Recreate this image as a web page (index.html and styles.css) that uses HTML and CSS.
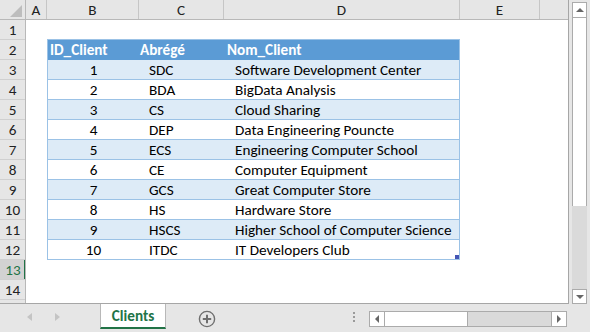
FILE: index.html
```html
<!DOCTYPE html>
<html>
<head>
<meta charset="utf-8">
<link rel="stylesheet" href="styles.css">
</head>
<body>
<div class="app">
  <div class="main">
    <div class="sheet">
      <div class="colhdr">
        <div class="corner"><svg width="25" height="19" viewBox="0 0 25 19"><polygon points="22,5 22,17 10,17" fill="#bdbdbd"/></svg></div>
        <div class="ch w-a">A</div>
        <div class="ch w-b">B</div>
        <div class="ch w-c">C</div>
        <div class="ch w-d">D</div>
        <div class="ch w-e">E</div>
        <div class="ch w-f"></div>
      </div>
      <div class="body">
        <div class="rowhdrs">
          <div class="rh">1</div>
          <div class="rh">2</div>
          <div class="rh">3</div>
          <div class="rh">4</div>
          <div class="rh">5</div>
          <div class="rh">6</div>
          <div class="rh">7</div>
          <div class="rh">8</div>
          <div class="rh">9</div>
          <div class="rh">10</div>
          <div class="rh">11</div>
          <div class="rh">12</div>
          <div class="rh rh-sel">13</div>
          <div class="rh">14</div>
          <div class="rh"></div>
        </div>
        <div class="cells">
          <div class="tbl">
            <div class="tr th"><div class="c cb">ID_Client</div><div class="c cc">Abrégé</div><div class="c cd">Nom_Client</div></div>
            <div class="tr odd"><div class="c cb num">1</div><div class="c cc">SDC</div><div class="c cd">Software Development Center</div></div>
            <div class="tr"><div class="c cb num">2</div><div class="c cc">BDA</div><div class="c cd">BigData Analysis</div></div>
            <div class="tr odd"><div class="c cb num">3</div><div class="c cc">CS</div><div class="c cd">Cloud Sharing</div></div>
            <div class="tr"><div class="c cb num">4</div><div class="c cc">DEP</div><div class="c cd">Data Engineering Pouncte</div></div>
            <div class="tr odd"><div class="c cb num">5</div><div class="c cc">ECS</div><div class="c cd">Engineering Computer School</div></div>
            <div class="tr"><div class="c cb num">6</div><div class="c cc">CE</div><div class="c cd">Computer Equipment</div></div>
            <div class="tr odd"><div class="c cb num">7</div><div class="c cc">GCS</div><div class="c cd">Great Computer Store</div></div>
            <div class="tr"><div class="c cb num">8</div><div class="c cc">HS</div><div class="c cd">Hardware Store</div></div>
            <div class="tr odd"><div class="c cb num">9</div><div class="c cc">HSCS</div><div class="c cd">Higher School of Computer Science</div></div>
            <div class="tr last"><div class="c cb num">10</div><div class="c cc">ITDC</div><div class="c cd">IT Developers Club</div><span class="handle"></span></div>
          </div>
        </div>
      </div>
    </div>
    <div class="vscroll">
      <div class="sbtn vup"><svg width="14" height="14" viewBox="0 0 14 14"><polygon points="3,9 11,9 7,5" fill="#666"/></svg></div>
      <div class="vthumb"></div>
      <div class="vtrack"></div>
      <div class="sbtn vdown"><svg width="14" height="13" viewBox="0 0 14 13"><polygon points="3,5 11,5 7,9" fill="#666"/></svg></div>
    </div>
  </div>
  <div class="tabbar">
    <div class="nav">
      <svg width="100" height="28" viewBox="0 0 100 28"><polygon points="32,9 32,17 27,13" fill="#c4c4c4"/><polygon points="55,9 55,17 60,13" fill="#c4c4c4"/></svg>
    </div>
    <div class="tab">Clients</div>
    <div class="add"><svg width="18" height="18" viewBox="0 0 18 18"><circle cx="9" cy="9" r="7.6" fill="none" stroke="#6f6f6f" stroke-width="1.4"/><path d="M9 4.8V13.2M4.8 9H13.2" stroke="#6f6f6f" stroke-width="2"/></svg></div>
    <div class="grip"><span></span><span></span><span></span></div>
    <div class="hscroll">
      <div class="sbtn hl"><svg width="14" height="14" viewBox="0 0 14 14"><polygon points="9,3 9,11 5,7" fill="#666"/></svg></div>
      <div class="hthumb"></div>
      <div class="htrack"></div>
      <div class="sbtn hr"><svg width="14" height="14" viewBox="0 0 14 14"><polygon points="5,3 5,11 9,7" fill="#666"/></svg></div>
    </div>
  </div>
</div>
</body>
</html>
```
FILE: styles.css
```css
* { box-sizing: border-box; }
html, body { margin: 0; padding: 0; }
body {
  width: 590px;
  height: 332px;
  overflow: hidden;
  background: #e6e6e6;
  font-family: "Carlito", "Lato", "Noto Sans", sans-serif;
  font-size: 15.2px;
  color: #000;
}
.app { width: 590px; height: 332px; display: flex; flex-direction: column; }
.main { height: 304px; display: flex; }
.sheet {
  width: 569px;
  height: 304px;
  background: #fff;
  border-right: 1px solid #a6a6a6;
  border-bottom: 1px solid #a6a6a6;
  display: flex;
  flex-direction: column;
  overflow: hidden;
}
.colhdr {
  height: 20px;
  flex: none;
  display: flex;
  background: #e6e6e6;
  border-bottom: 1px solid #b8b8b8;
}
.corner { width: 26px; border-right: 1px solid #b8b8b8; line-height: 0; }
.ch {
  border-right: 1px solid #c6c6c6;
  text-align: center;
  line-height: 20px;
  color: #222;
}
.w-a { width: 21px; }
.w-b { width: 92px; }
.w-c { width: 85px; }
.w-d { width: 236px; }
.w-e { width: 80px; }
.w-f { width: 28px; border-right: none; }
.body { flex: 1; display: flex; min-height: 0; }
.rowhdrs {
  width: 26px;
  flex: none;
  background: #e6e6e6;
  border-right: 1px solid #b8b8b8;
  overflow: hidden;
}
.rh {
  height: 20px;
  border-bottom: 1px solid #d0d0d0;
  text-align: center;
  line-height: 21px;
  color: #222;
  overflow: hidden;
}
.rh-sel {
  background: #d2d2d2;
  color: #217346;
  box-shadow: inset -2px 0 0 #217346;
  margin-right: -1px;
}
.cells { flex: 1; padding-left: 21px; padding-top: 19px; }
.tbl {
  width: 413px;
  border: 1px solid #9bc2e6;
  border-bottom: none;
}
.tr { display: flex; height: 20px; border-bottom: 1px solid #9bc2e6; position: relative; }
.tr.odd { background: #ddebf7; }
.th { background: #5b9bd5; color: #fff; font-weight: bold; border-bottom: none; }
.c { line-height: 21px; white-space: nowrap; overflow: hidden; }
.cb { width: 91px; padding-left: 2px; }
.cc { width: 85px; padding-left: 10px; }
.cd { width: 235px; padding-left: 11px; }
.th .cc { padding-left: 1px; }
.th .cd { padding-left: 3px; }
.cb.num { text-align: center; padding-left: 0; }
.handle {
  position: absolute;
  right: 0;
  bottom: 0;
  width: 4px;
  height: 4px;
  background: #4455b5;
}
.vscroll {
  width: 21px;
  height: 304px;
  padding: 2px 3px 0 3px;
  display: flex;
  flex-direction: column;
  background: #e6e6e6;
}
.sbtn {
  background: #fff;
  border: 1px solid #ababab;
  line-height: 0;
  flex: none;
}
.vup { height: 16px; }
.vthumb { height: 188px; background: #fff; border-left: 1px solid #ababab; border-right: 1px solid #ababab; }
.vtrack { flex: 1; background: #dadada; }
.vdown { height: 15px; }
.tabbar { height: 28px; display: flex; align-items: flex-start; }
.nav { width: 100px; height: 28px; line-height: 0; }
.tab {
  width: 66px;
  height: 25px;
  background: #fff;
  border-left: 1px solid #b8b8b8;
  border-right: 1px solid #b8b8b8;
  border-bottom: 2px solid #217346;
  color: #217346;
  font-weight: bold;
  text-align: center;
  line-height: 25px;
}
.add { margin-left: 32px; margin-top: 6px; line-height: 0; }
.grip {
  margin-left: 137px;
  margin-top: 8px;
  width: 3px;
  display: flex;
  flex-direction: column;
  gap: 2px;
}
.grip span { width: 2px; height: 2px; background: #9a9a9a; }
.hscroll {
  margin-left: 13px;
  margin-top: 7px;
  width: 198px;
  height: 16px;
  display: flex;
  border: 1px solid #ababab;
  background: #dadada;
}
.hscroll .sbtn { border: none; width: 15px; height: 14px; }
.hl { border-right: 1px solid #ababab !important; }
.hr { border-left: 1px solid #ababab !important; }
.hthumb { width: 83px; background: #fff; border-right: 1px solid #ababab; }
.htrack { flex: 1; }
```
